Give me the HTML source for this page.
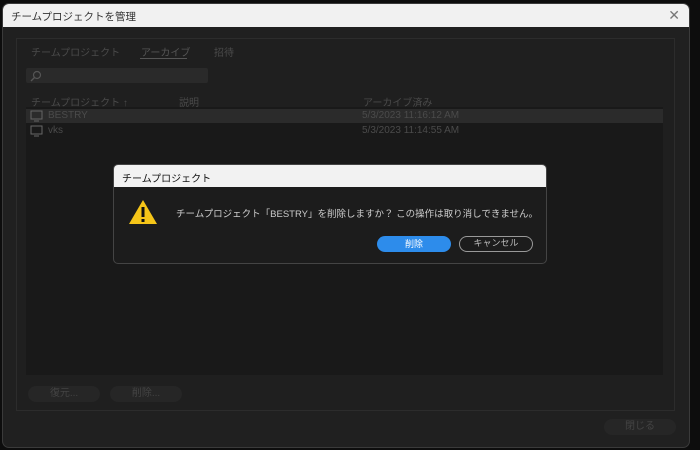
<!DOCTYPE html>
<html><head><meta charset="utf-8"><style>
*{margin:0;padding:0;box-sizing:border-box}
body{width:700px;height:450px;background:#0d0d0d;font-family:"Liberation Sans","Noto Sans CJK JP",sans-serif;position:relative;overflow:hidden}
.win{position:absolute;left:2px;top:3px;width:688px;height:445px;background:#202020;border-radius:7px;border:1px solid #3a3a3a;overflow:hidden}
.tb{height:23px;background:#f1f1f1;font-size:10.5px;color:#333;padding:5px 8px}
.x{position:absolute;right:9px;top:3px;color:#777;font-size:14px;font-weight:normal}
.panel{position:absolute;left:13px;top:34px;width:659px;height:373px;border:1px solid #2c2c2c;background:#1f1f1f}
.t{position:absolute;font-size:10px;color:#4a4a4a}
.search{position:absolute;left:9px;top:29px;width:182px;height:15px;background:#2a2a2a;border-radius:2px}
.list{position:absolute;left:9px;top:68px;width:637px;height:268px;background:#191919}
.row{position:absolute;left:0;width:637px;height:14px;font-size:10px;color:#4b4b4b}
.btn{position:absolute;height:16px;width:72px;border-radius:8px;background:#262626;font-size:10px;color:#444;text-align:center;line-height:16px}
.dlg{position:absolute;left:113px;top:164px;width:434px;height:100px;background:#1c1c1c;border:1px solid #444;border-radius:5px;overflow:hidden}
.dt{height:22px;background:#f2f2f2;font-size:10px;color:#111;padding:5px 8px}
</style></head><body>
<div class="win">
<div class="tb">チームプロジェクトを管理</div><div class="x">✕</div>
<div class="panel">
<div class="t" style="left:14px;top:5px">チームプロジェクト</div>
<div class="t" style="left:124px;top:5px;color:#555">アーカイブ</div>
<div style="position:absolute;left:123px;top:19px;width:47px;height:1px;background:#555"></div>
<div class="t" style="left:197px;top:5px">招待</div>
<div class="search"><svg width="14" height="14" style="position:absolute;left:3px;top:1px"><circle cx="8" cy="6" r="3.5" fill="none" stroke="#555" stroke-width="1.2"/><line x1="5.5" y1="8.5" x2="2" y2="12" stroke="#555" stroke-width="1.3"/></svg></div>
<div class="t" style="left:14px;top:55px">チームプロジェクト ↑</div>
<div class="t" style="left:162px;top:55px">説明</div>
<div class="t" style="left:346px;top:55px">アーカイブ済み</div>
<div class="list">
<div class="row" style="top:2px;background:#2b2b2b"><svg width="13" height="12" style="position:absolute;left:4px;top:1px"><rect x="1" y="1" width="11" height="8" fill="none" stroke="#666"/><line x1="4" y1="11" x2="9" y2="11" stroke="#666"/></svg><span style="position:absolute;left:22px;top:1px">BESTRY</span><span style="position:absolute;left:336px;top:1px">5/3/2023 11:16:12 AM</span></div>
<div class="row" style="top:17px"><svg width="13" height="12" style="position:absolute;left:4px;top:1px"><rect x="1" y="1" width="11" height="8" fill="none" stroke="#666"/><line x1="4" y1="11" x2="9" y2="11" stroke="#666"/></svg><span style="position:absolute;left:22px;top:1px">vks</span><span style="position:absolute;left:336px;top:1px">5/3/2023 11:14:55 AM</span></div>
</div>
<div class="btn" style="left:11px;top:347px">復元...</div>
<div class="btn" style="left:93px;top:347px">削除...</div>
</div>
<div class="btn" style="left:601px;top:415px">閉じる</div>
</div>
<div class="dlg">
<div class="dt">チームプロジェクト</div>
<svg width="32" height="28" style="position:absolute;left:13px;top:33px"><polygon points="16,2 30,26 2,26" fill="#f5c518"/><rect x="14.5" y="9" width="3" height="10" fill="#111"/><rect x="14.5" y="21" width="3" height="3" fill="#111"/></svg>
<div style="position:absolute;left:62px;top:41px;font-size:9.5px;color:#ccc;white-space:nowrap">チームプロジェクト「BESTRY」を削除しますか？ この操作は取り消しできません。</div>
<div style="position:absolute;left:263px;top:71px;width:74px;height:16px;border-radius:8px;background:#2d8ceb;color:#fff;font-size:9px;text-align:center;line-height:16px">削除</div>
<div style="position:absolute;left:345px;top:71px;width:74px;height:16px;border-radius:8px;border:1.5px solid #999;color:#bbb;font-size:9px;text-align:center;line-height:13px">キャンセル</div>
</div>
</body></html>
